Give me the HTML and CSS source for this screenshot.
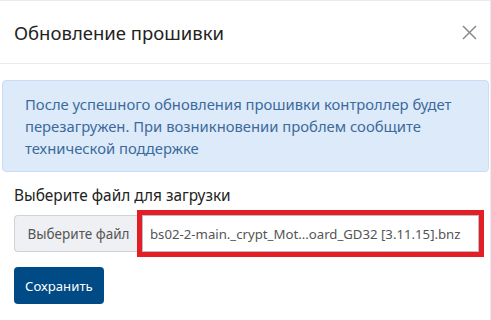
FILE: index.html
```html
<!DOCTYPE html>
<html lang="ru">
<head>
    <meta charset="UTF-8">
    <title>Обновление прошивки</title>
    <link rel="stylesheet" href="styles.css">
</head>
<body>
    <div class="modal">
        <div class="modal-header">
            <h2 class="modal-title">Обновление прошивки</h2>
            <button class="close-button" aria-label="Закрыть">
                <svg width="15" height="15" viewBox="0 0 15 15">
                    <path d="M1 1 L14 14 M14 1 L1 14" stroke="#8a8a8a" stroke-width="1.5" fill="none"/>
                </svg>
            </button>
        </div>
        <div class="modal-body">
            <div class="alert">
                После успешного обновления прошивки контроллер будет перезагружен. При возникновении проблем сообщите технической поддержке
            </div>
            <label class="field-label">Выберите файл для загрузки</label>
            <div class="file-group">
                <span class="file-button">Выберите файл</span>
                <span class="file-name">bs02-2-main._crypt_Mot...oard_GD32 [3.11.15].bnz</span>
            </div>
            <button class="save-button">Сохранить</button>
        </div>
    </div>
</body>
</html>
```

FILE: styles.css
```css
* {
    box-sizing: border-box;
}

body {
    margin: 0;
    background: #fff;
    font-family: 'Noto Sans', 'Open Sans', sans-serif;
    color: #222;
}

.modal {
    width: 492px;
    height: 320px;
    margin-left: -1px;
    border: 1px solid #e9ecef;
    border-bottom: none;
}

.modal-header {
    display: flex;
    align-items: center;
    justify-content: space-between;
    height: 63px;
    padding: 0 13px 0 14px;
    border-bottom: 1px solid #e9ecef;
}

.modal-title {
    margin: 0;
    font-size: 18.5px;
    font-weight: normal;
    color: #222;
}

.close-button {
    display: flex;
    padding: 0;
    border: none;
    background: none;
    cursor: pointer;
}

.modal-body {
    padding: 16px 13px 16px 14px;
}

.alert {
    margin: 0 -12px 0 -12px;
    padding: 12px 22px;
    background: #dceafa;
    border: 1px solid #c9def5;
    border-radius: 4px;
    color: #3d6a9b;
    font-size: 14.8px;
    line-height: 22px;
}

.field-label {
    display: block;
    margin-top: 13px;
    font-size: 15.4px;
    line-height: 22px;
}

.file-group {
    display: flex;
    height: 37px;
    margin-top: 8px;
    margin-right: -2px;
}

.file-button {
    display: flex;
    align-items: center;
    justify-content: center;
    width: 128px;
    background: #eef0f4;
    border: 1px solid #cfd3d9;
    border-right: none;
    border-radius: 4px 0 0 4px;
    color: #555;
    font-size: 13.5px;
    white-space: nowrap;
}

.file-name {
    flex: 1;
    display: flex;
    align-items: center;
    padding: 0 7px;
    border: 1px solid #b9bdc3;
    outline: 5px solid #e31e24;
    color: #555;
    font-size: 13.2px;
    white-space: nowrap;
}

.save-button {
    display: block;
    margin-top: 15px;
    height: 37px;
    padding: 0 11px;
    border: none;
    border-radius: 4px;
    background: #004a85;
    color: #fff;
    font-family: inherit;
    font-size: 13.2px;
    cursor: pointer;
}
```
